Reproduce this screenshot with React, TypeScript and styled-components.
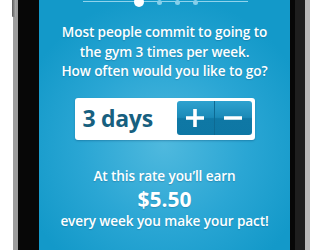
import React from 'react';
import styled, { createGlobalStyle } from 'styled-components';

const GlobalStyle = createGlobalStyle`
    html, body {
        margin: 0;
        padding: 0;
        background: #ffffff;
        overflow: hidden;
    }
    body {
        font-family: "Open Sans", "DejaVu Sans", sans-serif;
    }
`;

export default function App() {
    return (
        <>
            <GlobalStyle />
            <Page>
                <Phone>
                    <SideButton />
                    <Screen>
                        <Pager>
                            <PagerLine />
                            <Dot $active />
                            <Dot />
                            <Dot />
                            <Dot />
                        </Pager>

                        {/* question */}
                        <Copy>
                            Most people commit to going to<br />
                            the gym 3 times per week.<br />
                            How often would you like to go?
                        </Copy>

                        {/* stepper */}
                        <Stepper>
                            <Days>3 days</Days>
                            <StepButtons>
                                <StepButton aria-label="more">
                                    <svg width="20" height="20" viewBox="0 0 20 20">
                                        <path d="M10 1v18M1 10h18" stroke="#fff" strokeWidth="3.6" />
                                    </svg>
                                </StepButton>
                                <StepButton aria-label="less">
                                    <svg width="20" height="20" viewBox="0 0 20 20">
                                        <path d="M1 10h18" stroke="#fff" strokeWidth="3.6" />
                                    </svg>
                                </StepButton>
                            </StepButtons>
                        </Stepper>

                        {/* earnings */}
                        <Earn>
                            <Copy>At this rate you’ll earn</Copy>
                            <Amount>$5.50</Amount>
                            <Copy>every week you make your pact!</Copy>
                        </Earn>
                    </Screen>
                </Phone>
            </Page>
        </>
    );
}

const Page = styled.div`
    width: 322px;
    height: 250px;
    display: flex;
    padding-left: 13px;
    box-sizing: border-box;
`;

const Phone = styled.div`
    position: relative;
    display: flex;
    height: 250px;
    background: #070707;
    border-left: 5px solid #9c9c9c;
    border-right: 5px solid #b8b8b8;
    padding-left: 21px;
    padding-right: 15px;
    box-shadow: inset -10px 0 0 #1e1e1e;
`;

const SideButton = styled.div`
    position: absolute;
    left: -6px;
    top: 0;
    width: 4px;
    height: 17px;
    background: linear-gradient(90deg, #5a5a5a, #b0b0b0);
    border-radius: 0 0 1px 1px;
`;

const Screen = styled.div`
    width: 251px;
    height: 250px;
    display: flex;
    flex-direction: column;
    align-items: center;
    background: radial-gradient(ellipse 150px 150px at 125px 145px, #4fb9de 0%, #2aa6d4 55%, #1399c9 100%);
    color: #ffffff;
`;

const Pager = styled.div`
    position: relative;
    width: 165px;
    height: 8px;
    display: flex;
    align-items: flex-start;
    gap: 13px;
    padding-left: 51px;
    box-sizing: border-box;
    margin-left: 1px;
`;

const PagerLine = styled.div`
    position: absolute;
    left: 0;
    right: 0;
    top: 1px;
    height: 1px;
    background: #8fd3ec;
`;

const Dot = styled.div<{ $active?: boolean }>`
    position: relative;
    width: ${p => (p.$active ? 10 : 5)}px;
    height: ${p => (p.$active ? 10 : 5)}px;
    margin-top: ${p => (p.$active ? -3 : 0)}px;
    border-radius: 50%;
    background: ${p => (p.$active ? '#ffffff' : '#86cfea')};
    flex-shrink: 0;
`;

const Copy = styled.div`
    font-size: 13.6px;
    font-weight: 600;
    line-height: 19.5px;
    text-align: center;
    letter-spacing: -0.1px;
    text-shadow: 0 1px 1px rgba(0, 60, 100, 0.25);
    margin-top: 14px;
    white-space: nowrap;
`;

const Stepper = styled.div`
    margin-top: 17px;
    width: 180px;
    height: 42px;
    box-sizing: border-box;
    background: #ffffff;
    border-radius: 3px;
    display: flex;
    align-items: flex-start;
    justify-content: space-between;
    padding: 3px 3px 0 8px;
    box-shadow: 0 1px 2px rgba(0, 50, 90, 0.3);
`;

const Days = styled.div`
    color: #17607f;
    font-size: 23px;
    font-weight: 700;
    line-height: 34px;
    letter-spacing: -0.3px;
`;

const StepButtons = styled.div`
    display: flex;
    width: 75px;
    height: 34px;
    border-radius: 3px;
    overflow: hidden;
    background: linear-gradient(180deg, #2ea2cf 0%, #1b8ab8 48%, #0f78a5 52%, #0e77a4 100%);
`;

const StepButton = styled.button`
    flex: 1;
    display: flex;
    align-items: center;
    justify-content: center;
    border: none;
    background: transparent;
    padding: 0;
    & + & {
        border-left: 1px solid #0d6a93;
    }
`;

const Earn = styled.div`
    margin-top: 26px;
    display: flex;
    flex-direction: column;
    align-items: center;
    & > ${Copy} {
        margin-top: 0;
    }
`;

const Amount = styled.div`
    font-size: 21px;
    font-weight: 700;
    line-height: 28px;
    margin: 0 0 -2px;
    text-shadow: 0 1px 1px rgba(0, 60, 100, 0.25);
`;
